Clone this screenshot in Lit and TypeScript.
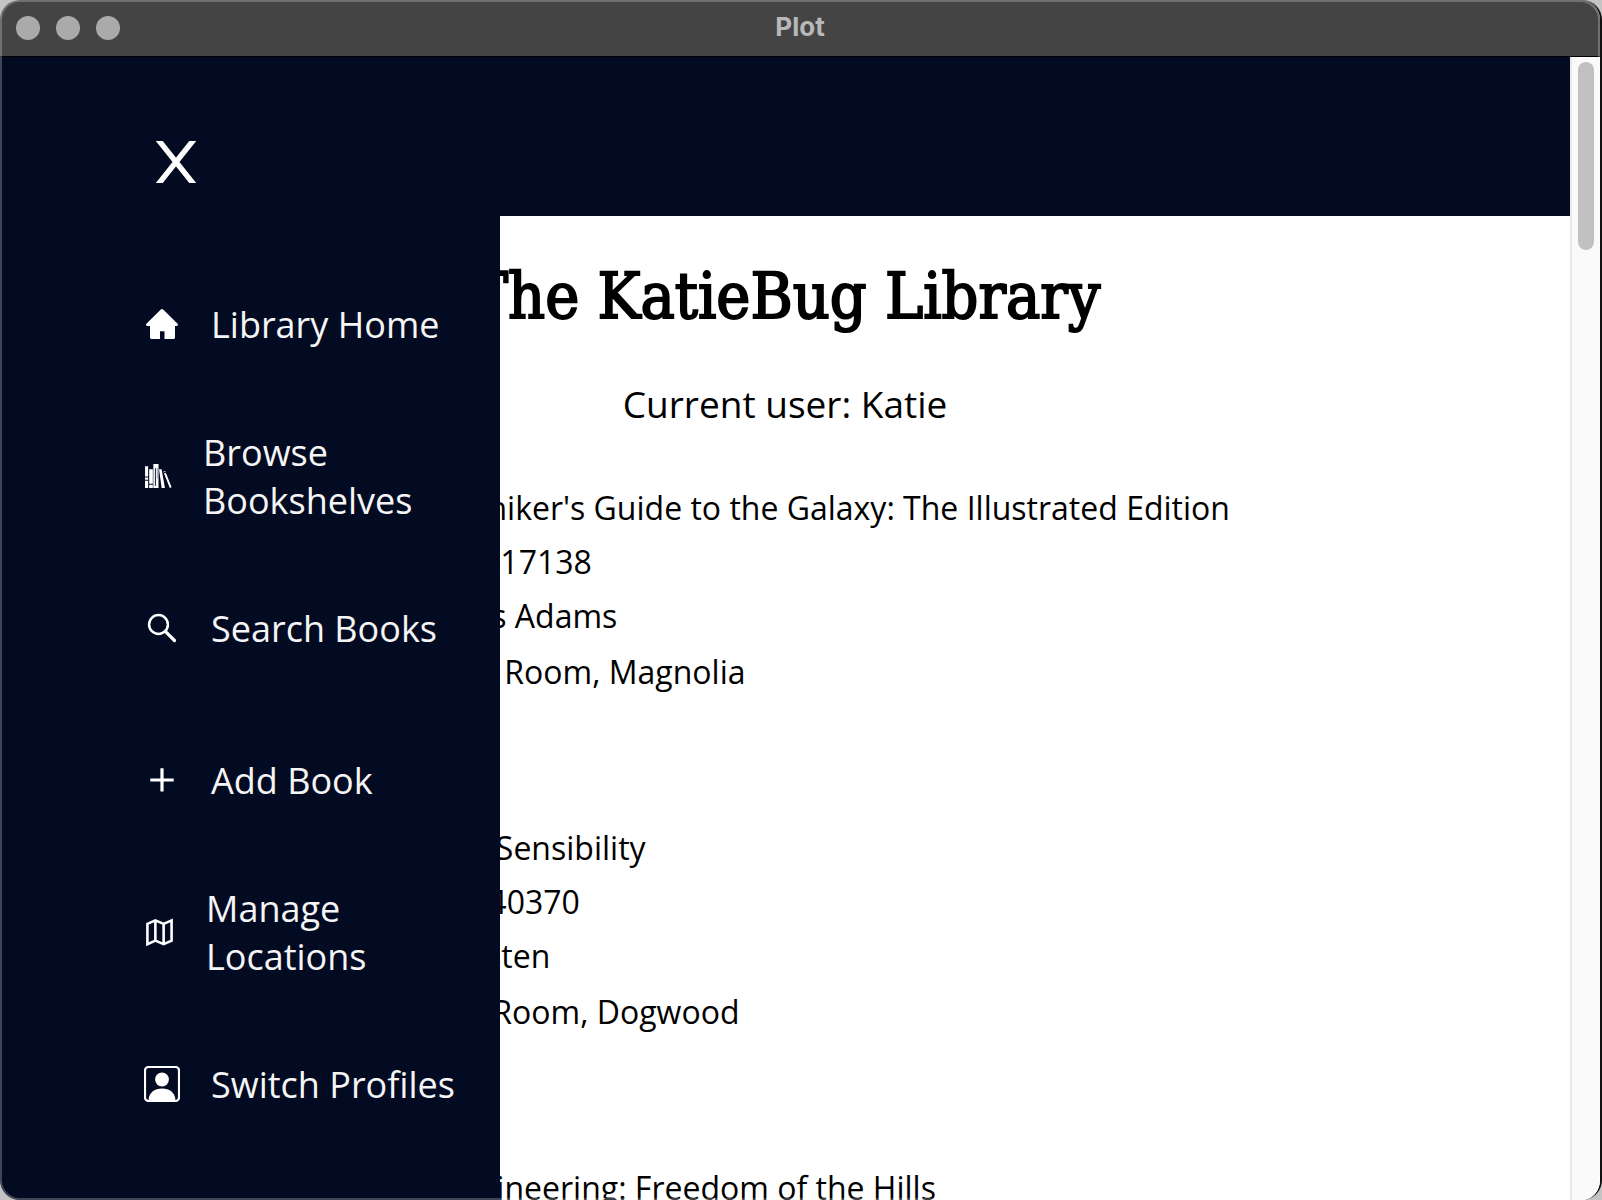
import { LitElement, html, css, svg, TemplateResult } from "lit";
import { customElement, property } from "lit/decorators.js";
import { styleMap } from "lit/directives/style-map.js";

interface Book {
  title: string;
  isbn: string;
  author: string;
  location: string;
  coverWidth: number;
}

interface NavItem {
  label: string;
  icon: TemplateResult;
  size: "large" | "medium" | "small";
}

const BOOKS: Book[] = [
  {
    title: "The Hitchhiker's Guide to the Galaxy: The Illustrated Edition",
    isbn: "9780593517138",
    author: "Douglas Adams",
    location: "Living Room, Magnolia",
    coverWidth: 166,
  },
  {
    title: "Sense and Sensibility",
    isbn: "9780141040370",
    author: "Jane Austen",
    location: "Living Room, Dogwood",
    coverWidth: 154,
  },
  {
    title: "Mountaineering: Freedom of the Hills",
    isbn: "9781680510041",
    author: "The Mountaineers",
    location: "Living Room, Dogwood",
    coverWidth: 200,
  },
];

const homeIcon = svg`<svg viewBox="0 0 36 36" fill="currentColor" aria-hidden="true">
  <path d="M16.6 3.7a2 2 0 0 1 2.8 0L33.400 17.400c1.200 1.200.500 2.600-1 2.600H31v11.500a1.600 1.600 0 0 1-1.600 1.600H20.500V25.200h-4.500v7.900H7.600A1.600 1.600 0 0 1 6 31.500V20H3.600c-1.500 0-2.200-1.400-1-2.600z"/></svg>`;
const shelfIcon = svg`<svg viewBox="0 0 27 27" fill="currentColor" aria-hidden="true">
  <path d="M1 4h3v10H1zM1 15h3v2H1zM1 18h3v7H1zM5 7h3.500v14H5zM5 22h3.500v3H5zM9 2h5v23H9z"/>
  <path d="M14.500 7h2.500l3.200 18h-3.200zM19.300 11l1.800-.6 5.500 14-1.700.6zM18.600 9.400l1.900-.7.300.8-1.900.7z"/>
  <path d="M11 6v17" stroke="#030b23" stroke-width=".9"/><path d="M12.800 6v10" stroke="#030b23" stroke-width=".4"/></svg>`;
const searchIcon = svg`<svg viewBox="0 0 36 36" fill="none" stroke="currentColor" aria-hidden="true">
  <circle cx="14.500" cy="14.500" r="9.400" stroke-width="2.500"/><path d="M21.300 21.300 30.500 30.500" stroke-width="3.200" stroke-linecap="round"/></svg>`;
const plusIcon = svg`<svg viewBox="0 0 36 36" fill="none" stroke="currentColor" stroke-width="3.200" aria-hidden="true">
  <path d="M18 6.200v23.300M6.300 18h23.400"/></svg>`;
const mapIcon = svg`<svg viewBox="0 0 30 30" fill="none" stroke="currentColor" stroke-width="2.500" aria-hidden="true">
  <path d="M3.300 6.700 11 3.300 19 6.700 26.700 3.300V22.800L19 26.300 11 22.800 3.300 26.300zM11 3.300v19.500M19 6.700v19.600"/></svg>`;
const profileIcon = svg`<svg viewBox="0 0 36 36" aria-hidden="true">
  <rect x="1" y="1" width="34" height="34" rx="3.500" fill="none" stroke="currentColor" stroke-width="2.200"/>
  <circle cx="18" cy="13.500" r="6.900" fill="currentColor"/>
  <path d="M4.700 35v-2.500c1.200-6 5.500-9.900 13.300-9.900s12.100 3.900 13.300 9.900V35z" fill="currentColor"/></svg>`;

const NAV: NavItem[] = [
  { label: "Library Home", icon: homeIcon, size: "large" },
  { label: "Browse Bookshelves", icon: shelfIcon, size: "small" },
  { label: "Search Books", icon: searchIcon, size: "large" },
  { label: "Add Book", icon: plusIcon, size: "large" },
  { label: "Manage Locations", icon: mapIcon, size: "medium" },
  { label: "Switch Profiles", icon: profileIcon, size: "large" },
];

@customElement("window-bar")
export class WindowBar extends LitElement {
  @property() heading = "";

  static styles = css`
    :host {
      display: grid;
      grid-template-columns: 1fr auto 1fr;
      align-items: center;
      height: 57px;
      box-sizing: border-box;
      padding: 0 16px;
      background: #444;
      border-bottom: 1px solid #000;
    }
    .buttons {
      display: flex;
      gap: 16px;
    }
    .dot {
      width: 24px;
      height: 24px;
      padding: 0;
      border: 0;
      border-radius: 50%;
      background: #aaa;
    }
    .heading {
      padding-bottom: 2px;
      font: 700 26px/32px Inter, sans-serif;
      color: #b8b8b8;
    }
  `;

  render() {
    return html`
      <div class="buttons">
        <button class="dot" aria-label="Close"></button>
        <button class="dot" aria-label="Minimize"></button>
        <button class="dot" aria-label="Zoom"></button>
      </div>
      <div class="heading">${this.heading}</div>
    `;
  }
}

@customElement("nav-drawer")
export class NavDrawer extends LitElement {
  static styles = css`
    :host {
      display: block;
      box-sizing: border-box;
      padding: 72px 40px 0 144px;
      background: #030b23;
      color: #f5f5f5;
    }
    .close {
      display: block;
      width: 64px;
      height: 64px;
      padding: 12px;
      border: 0;
      background: none;
      color: #fff;
    }
    .close svg {
      display: block;
      width: 40px;
      height: 42px;
    }
    .list {
      list-style: none;
      margin: 56px 0 0;
      padding: 0;
    }
    .link {
      display: flex;
      align-items: center;
      gap: 31px;
      height: 152px;
      color: inherit;
      text-decoration: none;
      font: 36px/48px "Open Sans", sans-serif;
    }
    .icon {
      flex: none;
      padding-bottom: 2px;
      color: #fff;
    }
    .icon svg {
      display: block;
    }
    .large {
      width: 36px;
    }
    .medium {
      width: 31px;
    }
    .small {
      width: 28px;
    }
  `;

  render() {
    return html`
      <button class="close" aria-label="Close menu">
        <svg viewBox="0 0 40 42" fill="none" stroke="currentColor" stroke-width="5.400" aria-hidden="true">
          <path d="M0.900-3 39.100 45M39.100-3 0.900 45" />
        </svg>
      </button>
      <nav>
        <ul class="list">
          ${NAV.map(
            (item) => html`<li>
              <a class="link" href="#">
                <span class="icon ${item.size}">${item.icon}</span>
                <span>${item.label}</span>
              </a>
            </li>`
          )}
        </ul>
      </nav>
    `;
  }
}

@customElement("book-entry")
export class BookEntry extends LitElement {
  @property({ attribute: false }) book!: Book;

  static styles = css`
    :host {
      display: flex;
      gap: 32px;
      font: 32px/54px "Open Sans", sans-serif;
      color: #000;
      white-space: nowrap;
    }
    .cover {
      flex: none;
      background: #ddd;
    }
    p {
      margin: 0;
    }
    .location {
      padding-top: 2px;
    }
  `;

  render() {
    const { title, isbn, author, location, coverWidth } = this.book;
    return html`
      <div class="cover" style=${styleMap({ width: `${coverWidth}px` })}></div>
      <div>
        <p>Title: ${title}</p>
        <p>ISBN: ${isbn}</p>
        <p>Author: ${author}</p>
        <p class="location">Location: ${location}</p>
      </div>
    `;
  }
}

@customElement("app-root")
export class AppRoot extends LitElement {
  static styles = css`
    :host {
      display: block;
      height: 100vh;
      background: #c4c4c4;
    }
    .window {
      position: relative;
      display: flex;
      flex-direction: column;
      height: 100%;
      overflow: hidden;
      box-sizing: border-box;
      border-right: 2px solid #111;
      border-radius: 20px;
      background: #fff;
    }
    .window::after {
      content: "";
      position: absolute;
      inset: 0;
      border: 2px solid rgba(255, 255, 255, 0.24);
      border-radius: 20px;
      pointer-events: none;
    }
    .view {
      position: relative;
      display: grid;
      grid-template-columns: 1fr 30px;
      flex: 1;
      min-height: 0;
    }
    .page {
      overflow: hidden;
    }
    .banner {
      height: 159px;
      background: #030b23;
    }
    .title {
      margin: 40px 0 0;
      text-align: center;
      font: 400 64px/80px "DejaVu Serif Condensed", "DejaVu Serif", serif;
      -webkit-text-stroke: 2px #000;
    }
    .user {
      margin: 43px 0 0;
      text-align: center;
      font: 37px/50px "Open Sans", sans-serif;
    }
    .books {
      display: grid;
      gap: 122px;
      padding: 52px 0 0 68px;
    }
    .track {
      background: #fafafa;
      border-left: 2px solid #e8e8e8;
      padding: 5px 6px;
    }
    .thumb {
      height: 188px;
      border-radius: 8px;
      background: #c1c1c1;
    }
    .drawer {
      position: absolute;
      inset: 0 auto 0 0;
      width: 500px;
    }
  `;

  render() {
    return html`
      <div class="window">
        <window-bar heading="Plot"></window-bar>
        <div class="view">
          <main class="page">
            <div class="banner"></div>
            <h1 class="title">The KatieBug Library</h1>
            <p class="user">Current user: Katie</p>
            <div class="books">
              ${BOOKS.map((book) => html`<book-entry .book=${book}></book-entry>`)}
            </div>
          </main>
          <div class="track"><div class="thumb"></div></div>
          <nav-drawer class="drawer"></nav-drawer>
        </div>
      </div>
    `;
  }
}
